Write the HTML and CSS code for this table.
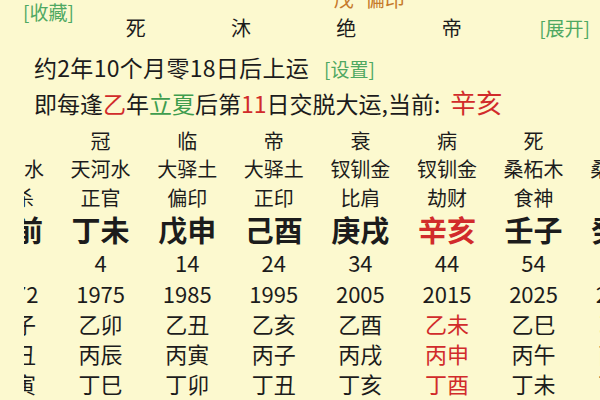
FILE: index.html
```html
<!DOCTYPE html>
<html lang="zh-CN">
<head>
<meta charset="utf-8">
<title>大运</title>
<link rel="stylesheet" href="styles.css">
</head>
<body>
<div class="page">
  <div class="row-fav">
    <span class="link fav">[收藏]</span>
    <span class="canggan"><span>戊</span><span class="cg-ss">偏印</span></span>
  </div>
  <div class="pillars">
    <span class="p first">死</span><span class="p">沐</span><span class="p">绝</span><span class="p">帝</span><span class="link expand">[展开]</span>
  </div>
  <div class="line line1">约2年10个月零18日后上运<span class="link set">[设置]</span></div>
  <div class="line line2">即每逢<span class="red">乙</span>年<span class="green">立夏</span>后第<span class="red">11</span>日交脱大运,当前:<span class="cur">辛亥</span></div>
  <div class="dayun-wrap">
    <div class="dayun">
      <span class="c">沐</span><span class="c">冠</span><span class="c">临</span><span class="c">帝</span><span class="c">衰</span><span class="c">病</span><span class="c">死</span><span class="c">墓</span>
      <span class="ny">天河水</span><span class="ny">天河水</span><span class="ny">大驿土</span><span class="ny">大驿土</span><span class="ny">钗钏金</span><span class="ny">钗钏金</span><span class="ny">桑柘木</span><span class="ny">桑柘木</span>
      <span class="ss">七杀</span><span class="ss">正官</span><span class="ss">偏印</span><span class="ss">正印</span><span class="ss">比肩</span><span class="ss">劫财</span><span class="ss">食神</span><span class="ss">伤官</span>
      <span class="gz">运前</span><span class="gz">丁未</span><span class="gz">戊申</span><span class="gz">己酉</span><span class="gz">庚戌</span><span class="gz red">辛亥</span><span class="gz">壬子</span><span class="gz">癸丑</span>
      <span class="v">1</span><span class="v">4</span><span class="v">14</span><span class="v">24</span><span class="v">34</span><span class="v">44</span><span class="v">54</span><span class="v">64</span>
      <span class="v">1972</span><span class="v">1975</span><span class="v">1985</span><span class="v">1995</span><span class="v">2005</span><span class="v">2015</span><span class="v">2025</span><span class="v">2035</span>
      <span class="v">壬子</span><span class="v">乙卯</span><span class="v">乙丑</span><span class="v">乙亥</span><span class="v">乙酉</span><span class="v red">乙未</span><span class="v">乙巳</span><span class="v">乙卯</span>
      <span class="v">癸丑</span><span class="v">丙辰</span><span class="v">丙寅</span><span class="v">丙子</span><span class="v">丙戌</span><span class="v red">丙申</span><span class="v">丙午</span><span class="v">丙辰</span>
      <span class="v">甲寅</span><span class="v">丁巳</span><span class="v">丁卯</span><span class="v">丁丑</span><span class="v">丁亥</span><span class="v red">丁酉</span><span class="v">丁未</span><span class="v">丁巳</span>
    </div>
  </div>
</div>
</body>
</html>
```

FILE: styles.css
```css
html, body {
  margin: 0;
  padding: 0;
}
body {
  width: 600px;
  height: 400px;
  overflow: hidden;
  background: #fcf9cf;
  color: #1c1c1c;
  font-family: "Noto Sans CJK SC", "Noto Sans", sans-serif;
}
.page {
  width: 600px;
}
.link {
  color: #4fa862;
}
.red {
  color: #d12b2b;
}
.green {
  color: #3f9d4e;
}

/* top partial row */
.row-fav {
  display: flex;
  align-items: flex-start;
  height: 17px;
  font-size: 19px;
  line-height: 24px;
}
.fav {
  margin-left: 23px;
}
.canggan {
  margin-left: 260px;
  margin-top: -13px;
  font-size: 20px;
  line-height: 24px;
  color: #c67a2c;
}
.cg-ss {
  margin-left: 11px;
}

/* four pillar states */
.pillars {
  display: grid;
  grid-template-columns: 83px repeat(4, 105.33px) 1fr;
  height: 22px;
  font-size: 20px;
  line-height: 22px;
  text-align: center;
}
.pillars .first {
  grid-column: 2;
}
.expand {
  text-align: right;
  padding-right: 10px;
  font-size: 19px;
}

/* start-of-luck text */
.line {
  font-size: 23px;
  line-height: 33px;
  padding-left: 34px;
  white-space: nowrap;
}
.line1 {
  margin-top: 12px;
  letter-spacing: 0.3px;
}
.set {
  font-size: 19px;
  margin-left: 15px;
  letter-spacing: 0;
}
.cur {
  font-size: 26px;
  margin-left: 10px;
  color: #d12b2b;
}

/* dayun table (horizontally scrolled) */
.dayun-wrap {
  margin-top: 6px;
  margin-left: 24px;
  overflow: hidden;
}
.dayun {
  display: grid;
  margin-left: -53.3px;
  grid-template-columns: repeat(8, 86.6px);
  grid-template-rows: 29px 28px 29px 35px 31px 30px 30px 30px 31px;
  align-items: center;
  text-align: center;
  white-space: nowrap;
}
.dayun span {
  line-height: 1.2;
}
.dayun .gz {
  font-size: 29px;
  font-weight: 700;
  line-height: 1;
}
.c, .ny, .ss {
  font-size: 20px;
}
.v {
  font-size: 22px;
}
```
